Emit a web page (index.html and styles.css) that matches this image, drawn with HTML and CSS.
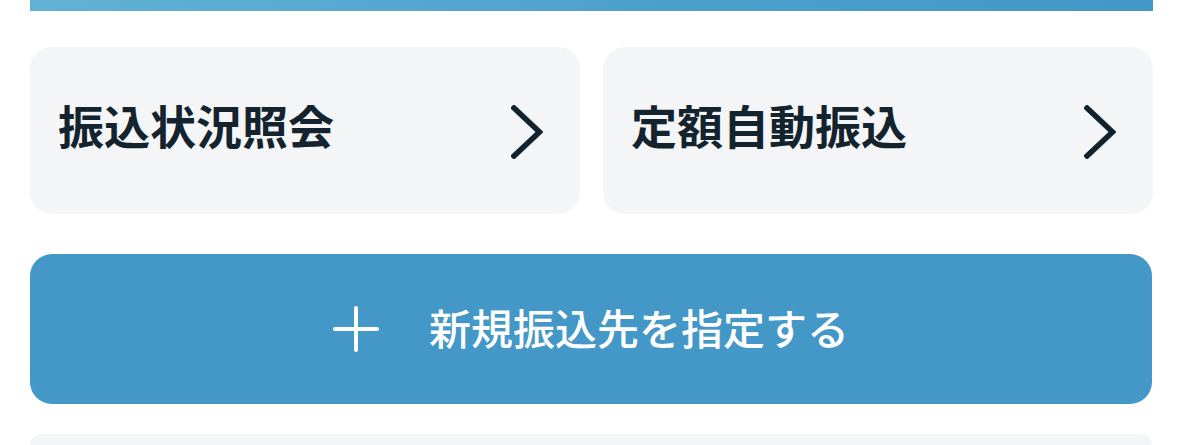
FILE: index.html
```html
<!DOCTYPE html>
<html lang="ja">
<head>
<meta charset="utf-8">
<title>振込</title>
<link rel="stylesheet" href="styles.css">
</head>
<body>
<main class="page">
  <div class="top-bar"></div>
  <div class="menu-grid">
    <a class="menu-card" href="#">
      <span class="menu-label">振込状況照会</span>
      <svg class="chevron" width="32" height="54" viewBox="0 0 32 54" aria-hidden="true">
        <path d="M3 3 L28.5 27 L3 51" fill="none" stroke="#11232f" stroke-width="5.5" stroke-linecap="square" stroke-linejoin="miter"/>
      </svg>
    </a>
    <a class="menu-card" href="#">
      <span class="menu-label">定額自動振込</span>
      <svg class="chevron" width="32" height="54" viewBox="0 0 32 54" aria-hidden="true">
        <path d="M3 3 L28.5 27 L3 51" fill="none" stroke="#11232f" stroke-width="5.5" stroke-linecap="square" stroke-linejoin="miter"/>
      </svg>
    </a>
  </div>
  <a class="primary-btn" href="#">
    <svg class="plus" width="46" height="46" viewBox="0 0 46 46" aria-hidden="true">
      <path d="M23 2 V44 M2 23 H44" fill="none" stroke="#ffffff" stroke-width="4" stroke-linecap="round"/>
    </svg>
    <span class="btn-label">新規振込先を指定する</span>
  </a>
  <div class="bottom-card"></div>
</main>
</body>
</html>
```
FILE: styles.css
```css
html, body {
  margin: 0;
  padding: 0;
  background: #ffffff;
}

body {
  font-family: "Noto Sans CJK JP", "Noto Sans", sans-serif;
  color: #14242f;
  overflow: hidden;
}

.page {
  width: 1123px;
  padding: 0 26px 0 30px;
  display: flex;
  flex-direction: column;
}

.top-bar {
  height: 11px;
  background: linear-gradient(90deg, #62b2d6 0%, #4a9fcb 60%, #4398c7 100%);
}

.menu-grid {
  margin-top: 36px;
  display: grid;
  grid-template-columns: 1fr 1fr;
  gap: 23px;
}

.menu-card {
  height: 167px;
  box-sizing: border-box;
  background: #f4f5f7;
  border-radius: 22px;
  padding: 0 37px 0 28px;
  display: flex;
  align-items: center;
  justify-content: space-between;
  text-decoration: none;
  color: #14242f;
}

.menu-label {
  font-size: 46px;
  font-weight: 700;
  letter-spacing: 0;
  line-height: 1;
  margin-bottom: 13px;
}

.chevron {
  display: block;
  margin-top: 2px;
}

.primary-btn {
  margin-top: 40px;
  height: 150px;
  margin-right: 1px;
  background: #4498c7;
  border-radius: 22px;
  display: flex;
  align-items: center;
  justify-content: center;
  gap: 50px;
  text-decoration: none;
  color: #ffffff;
}

.plus {
  display: block;
  margin-bottom: 1px;
}

.btn-label {
  font-size: 42px;
  font-weight: 500;
  line-height: 1;
  margin-bottom: 5px;
}

.bottom-card {
  margin-top: 30px;
  height: 11px;
  background: #f4f5f7;
  border-radius: 22px 22px 0 0;
  margin-right: 1px;
}
```
